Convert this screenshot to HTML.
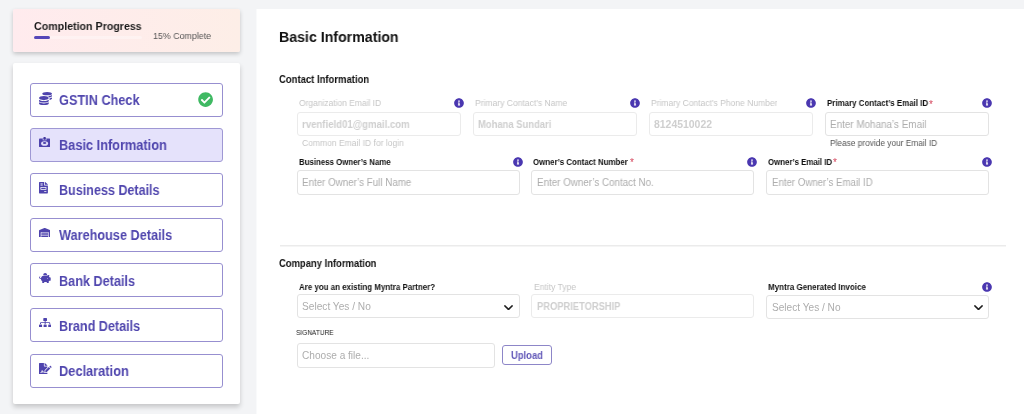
<!DOCTYPE html>
<html lang="en">
<head>
<meta charset="utf-8">
<title>Basic Information</title>
<style>
*{box-sizing:border-box;margin:0;padding:0}
html,body{width:1024px;height:414px;overflow:hidden}
body{background:#f3f4f6;font-family:"Liberation Sans",Arial,sans-serif;color:#111;position:relative}
.a,.tx,svg{position:absolute}
.tx{line-height:1;white-space:nowrap;transform-origin:0 50%;will-change:transform}
.progress{left:13px;top:9px;width:227px;height:43px;border-radius:2px;background:linear-gradient(90deg,#ffebee 0%,#fdeee7 100%);box-shadow:0 2px 4px rgba(0,0,0,.2)}
.track{left:34px;top:36px;width:108px;height:3px;border-radius:2px;background:rgba(255,255,255,.35)}
.bar{left:34px;top:36px;width:16px;height:3px;border-radius:2px;background:#5646b8}
.side{left:13px;top:63px;width:227px;height:341px;background:#fff;border-radius:2px;box-shadow:0 3px 5px rgba(0,0,0,.19)}
.item{left:30px;width:193px;height:34px;border:1px solid #978fd0;border-radius:3px;background:#fff}
.item.on{background:#e5e2fb;border-color:#9f98d4}
.main{left:257px;top:9px;width:767px;height:405px;background:#fff;box-shadow:-1px 0 0 #f9fafb}
.inp{height:24px;border:1px solid #e3e3e3;border-radius:3px;background:#fff}
.inp.dis{border-color:#ebebeb}
.hr{left:280px;top:245px;width:726px;height:1px;background:#ebebeb;box-shadow:0 1px 0 #f5f5f5}
.btn{left:502px;top:345px;width:50px;height:20px;border:1px solid #8d86c8;border-radius:3px;background:#fff}
</style>
</head>
<body>
<aside>
<div class="a progress"></div><div class="a track"></div><div class="a bar"></div>
<div class="a side"></div>
<div class="a item" style="top:83px"></div>
<div class="a item on" style="top:128px"></div>
<div class="a item" style="top:173px"></div>
<div class="a item" style="top:218px"></div>
<div class="a item" style="top:263px"></div>
<div class="a item" style="top:308px"></div>
<div class="a item" style="top:354px"></div>
<svg style="left:38.90px;top:91.50px" width="13.00" height="13.00" viewBox="0 0 512 512" preserveAspectRatio="none"><path fill="#4e43ad" d="M0 405.3V448c0 35.3 86 64 192 64s192-28.7 192-64v-42.7C342.700 434.400 267.200 448 192 448S41.300 434.400 0 405.300zM320 128c106 0 192-28.700 192-64S426 0 320 0 128 28.700 128 64s86 64 192 64zM0 300.400V352c0 35.300 86 64 192 64s192-28.700 192-64v-51.600c-41.300 34-116.900 51.600-192 51.600S41.300 334.400 0 300.400zm416 11c57.300-11.100 96-31.700 96-55.400v-42.700c-23.200 16.400-57.300 27.600-96 34.500v63.600zM192 160C86 160 0 195.800 0 240s86 80 192 80 192-35.800 192-80-86-80-192-80zm219.300 56.300c60-10.800 100.700-32 100.700-56.300v-42.700c-35.500 25.100-96.500 38.600-160.700 41.800 29.500 14.300 51.200 33.500 60 57.200z"/></svg>
<svg style="left:39.1px;top:137.1px" width="11.2" height="10.2" viewBox="0 0 11.2 10.2"><rect x="0" y="1.4" width="11.2" height="8.8" rx="0.9" fill="#4e43ad"/><path d="M3.7 1.4h3.8v1.9H3.7z" fill="#c9c4f3"/><rect x="4.4" y="0" width="2.4" height="2.8" rx="0.7" fill="#40369a"/><ellipse cx="5.6" cy="6.5" rx="3.5" ry="2.3" fill="#e2dffb"/><ellipse cx="5.6" cy="6.0" rx="1.7" ry="1.0" fill="#4e43ad"/></svg>
<svg style="left:39.10px;top:182.40px" width="8.90" height="11.40" viewBox="0 0 384 512" preserveAspectRatio="none"><path fill="#4e43ad" d="M288 256H96v64h192v-64zm89-151L279.100 7c-4.500-4.500-10.600-7-17-7H256v128h128v-6.100c0-6.300-2.500-12.400-7-16.900zm-153 31V0H24C10.700 0 0 10.700 0 24v464c0 13.300 10.700 24 24 24h336c13.300 0 24-10.700 24-24V160H248c-13.200 0-24-10.800-24-24zM64 72c0-4.420 3.580-8 8-8h80c4.420 0 8 3.580 8 8v16c0 4.420-3.580 8-8 8H72c-4.420 0-8-3.580-8-8V72zm0 64c0-4.420 3.580-8 8-8h80c4.420 0 8 3.580 8 8v16c0 4.420-3.580 8-8 8H72c-4.420 0-8-3.580-8-8v-16zm256 304c0 4.420-3.580 8-8 8h-80c-4.420 0-8-3.580-8-8v-16c0-4.420 3.580-8 8-8h80c4.420 0 8 3.580 8 8v16zm0-200v96c0 8.840-7.160 16-16 16H80c-8.840 0-16-7.160-16-16v-96c0-8.840 7.160-16 16-16h224c8.840 0 16 7.160 16 16z"/></svg>
<svg style="left:39.10px;top:228.00px" width="11.40" height="9.10" viewBox="0 0 640 512" preserveAspectRatio="none"><path fill="#4e43ad" d="M504 352H136.400c-4.400 0-8 3.600-8 8l-.100 48c0 4.400 3.600 8 8 8H504c4.400 0 8-3.600 8-8v-48c0-4.400-3.600-8-8-8zm0 96H136.100c-4.400 0-8 3.600-8 8l-.100 48c0 4.400 3.600 8 8 8h368c4.400 0 8-3.600 8-8v-48c0-4.400-3.600-8-8-8zm0-192H136.600c-4.400 0-8 3.600-8 8l-.100 48c0 4.400 3.600 8 8 8H504c4.400 0 8-3.600 8-8v-48c0-4.400-3.600-8-8-8zm106.500-139L338.400 3.700a48.150 48.150 0 0 0-36.900 0L29.500 117C11.700 124.500 0 141.900 0 161.300V504c0 4.400 3.600 8 8 8h80c4.400 0 8-3.600 8-8V256c0-17.600 14.600-32 32.600-32h382.800c18 0 32.600 14.400 32.600 32v248c0 4.400 3.600 8 8 8h80c4.400 0 8-3.600 8-8V161.300c0-19.400-11.700-36.800-29.500-44.300z"/></svg>
<svg style="left:39.10px;top:273.00px" width="11.70" height="10.20" viewBox="0 0 576 512" preserveAspectRatio="none"><path fill="#4e43ad" d="M560 224h-29.500c-8.800-20-21.600-37.700-37.400-52.500L512 96h-32c-29.400 0-55.400 13.500-73 34.300-7.600-1.100-15.100-2.300-23-2.300H256c-77.400 0-141.900 55-156.800 128H56c-14.800 0-26.500-13.500-23.500-28.800C34.700 215.800 45.400 208 57 208h1c3.300 0 6-2.700 6-6v-20c0-3.300-2.700-6-6-6-28.500 0-53.900 20.400-57.500 48.600C-3.900 258.800 22.700 288 56 288h40c0 52.200 25.400 98.100 64 127.300V496c0 8.800 7.200 16 16 16h64c8.800 0 16-7.200 16-16v-48h128v48c0 8.800 7.200 16 16 16h64c8.800 0 16-7.200 16-16v-80.700c11.800-8.900 22.300-19.400 31.300-31.300H560c8.800 0 16-7.200 16-16V240c0-8.800-7.200-16-16-16zm-128 64c-8.800 0-16-7.200-16-16s7.200-16 16-16 16 7.200 16 16-7.200 16-16 16zM256 96h128c5.400 0 10.700.4 15.900.8 0-.3.100-.5.100-.8 0-53-43-96-96-96s-96 43-96 96c0 2.100.5 4.100.6 6.200 15.200-3.900 31-6.200 47.400-6.200z"/></svg>
<svg style="left:39.10px;top:317.70px" width="12.30" height="9.60" viewBox="0 0 640 512" preserveAspectRatio="none"><path fill="#4e43ad" d="M128 352H32c-17.670 0-32 14.330-32 32v96c0 17.670 14.330 32 32 32h96c17.670 0 32-14.330 32-32v-96c0-17.670-14.330-32-32-32zm-24-80h192v48h48v-48h192v48h48v-57.590c0-21.170-17.230-38.410-38.410-38.410H344v-64h40c17.670 0 32-14.330 32-32V32c0-17.670-14.330-32-32-32H256c-17.670 0-32 14.330-32 32v96c0 17.670 14.330 32 32 32h40v64H94.410C73.230 224 56 241.230 56 262.410V320h48v-48zm264 80h-96c-17.670 0-32 14.330-32 32v96c0 17.670 14.330 32 32 32h96c17.670 0 32-14.330 32-32v-96c0-17.670-14.330-32-32-32zm240 0h-96c-17.670 0-32 14.330-32 32v96c0 17.670 14.330 32 32 32h96c17.670 0 32-14.330 32-32v-96c0-17.670-14.330-32-32-32z"/></svg>
<svg style="left:39.10px;top:362.70px" width="12.60" height="11.20" viewBox="0 0 576 512" preserveAspectRatio="none"><path fill="#4e43ad" d="M218.170 424.140c-2.950-5.920-8.090-6.520-10.170-6.520s-7.220.59-10.020 6.190l-7.670 15.340c-6.370 12.780-25.030 11.370-29.480-2.090L144 386.590l-10.610 31.880c-5.890 17.660-22.380 29.530-41 29.530H80c-8.840 0-16-7.160-16-16s7.160-16 16-16h12.390c4.830 0 9.110-3.080 10.640-7.660l18.190-54.640c3.300-9.810 12.440-16.410 22.780-16.410s19.480 6.590 22.770 16.410l13.880 41.640c19.750-16.190 54.060-9.700 66 14.160 1.890 3.780 5.490 5.950 9.360 6.260v-82.120l128-127.090V160H248c-13.200 0-24-10.800-24-24V0H24C10.700 0 0 10.700 0 24v464c0 13.300 10.700 24 24 24h336c13.300 0 24-10.700 24-24v-40l-128-.11c-23.240-.2-44.190-13.090-54.830-33.750zM384 121.900c0-6.300-2.500-12.400-7-16.900L279.100 7c-4.500-4.500-10.600-7-17-7H256v128h128v-6.100zm-96 225.060V416h68.990l161.680-162.780-67.880-67.880L288 346.960zm280.540-179.630l-31.870-31.870c-9.940-9.940-26.070-9.940-36.010 0l-27.250 27.250 67.880 67.880 27.250-27.250c9.950-9.940 9.950-26.070 0-36.010z"/></svg>
<svg style="left:198.10px;top:91.80px" width="15.20" height="15.20" viewBox="0 0 512 512" preserveAspectRatio="none"><path fill="#3fb963" d="M504 256c0 136.967-111.033 248-248 248S8 392.967 8 256 119.033 8 256 8s248 111.033 248 248zM227.314 387.314l184-184c6.248-6.248 6.248-16.379 0-22.627l-22.627-22.627c-6.248-6.249-16.379-6.249-22.628 0L216 308.118l-70.059-70.059c-6.248-6.248-16.379-6.248-22.628 0l-22.627 22.627c-6.248 6.248-6.248 16.379 0 22.627l104 104c6.249 6.249 16.379 6.249 22.628.001z"/></svg>
<div class="tx" id="t0" style="left:33.56px;top:20.69px;font-size:11px;color:#1c1c1c;font-weight:bold;transform:scaleX(0.9678);">Completion Progress</div>
<div class="tx" id="t1" style="left:153.37px;top:31.26px;font-size:9.5px;color:#555;transform:scaleX(0.9322);">15% Complete</div>
<div class="tx" id="t2" style="left:59.04px;top:93.15px;font-size:14px;color:#5046ae;font-weight:bold;transform:scaleX(0.9083);">GSTIN Check</div>
<div class="tx" id="t3" style="left:59.03px;top:138.25px;font-size:14px;color:#5046ae;font-weight:bold;transform:scaleX(0.9114);">Basic Information</div>
<div class="tx" id="t4" style="left:59.05px;top:183.35px;font-size:14px;color:#5046ae;font-weight:bold;transform:scaleX(0.8973);">Business Details</div>
<div class="tx" id="t5" style="left:59.04px;top:228.45px;font-size:14px;color:#5046ae;font-weight:bold;transform:scaleX(0.9072);">Warehouse Details</div>
<div class="tx" id="t6" style="left:59.04px;top:273.55px;font-size:14px;color:#5046ae;font-weight:bold;transform:scaleX(0.9051);">Bank Details</div>
<div class="tx" id="t7" style="left:59.05px;top:318.65px;font-size:14px;color:#5046ae;font-weight:bold;transform:scaleX(0.8981);">Brand Details</div>
<div class="tx" id="t8" style="left:59.03px;top:363.75px;font-size:14px;color:#5046ae;font-weight:bold;transform:scaleX(0.9152);">Declaration</div>
</aside>
<main>
<div class="a main"></div>
<div class="a inp dis" style="left:297px;top:112px;width:164px"></div>
<div class="a inp dis" style="left:473px;top:112px;width:164px"></div>
<div class="a inp dis" style="left:649px;top:112px;width:164px"></div>
<div class="a inp" style="left:825px;top:112px;width:164px"></div>
<div class="a inp" style="left:297px;top:170px;width:223px;height:25px"></div>
<div class="a inp" style="left:531px;top:170px;width:223px;height:25px"></div>
<div class="a inp" style="left:766px;top:170px;width:223px;height:25px"></div>
<div class="a inp" style="left:297px;top:294px;width:223px"></div>
<div class="a inp dis" style="left:531px;top:294px;width:223px"></div>
<div class="a inp" style="left:766px;top:295px;width:223px"></div>
<div class="a inp" style="left:297px;top:343px;width:198px;height:25px"></div>
<div class="a btn"></div>
<div class="a hr"></div>
<svg style="left:453.90px;top:98.40px" width="10.00" height="10.00" viewBox="0 0 512 512" preserveAspectRatio="none"><path fill="#4a37b0" d="M256 8C119.043 8 8 119.083 8 256c0 136.997 111.043 248 248 248s248-111.003 248-248C504 119.083 392.957 8 256 8zm0 110c23.196 0 42 18.804 42 42s-18.804 42-42 42-42-18.804-42-42 18.804-42 42-42zm56 254c0 6.627-5.373 12-12 12h-88c-6.627 0-12-5.373-12-12v-24c0-6.627 5.373-12 12-12h12v-64h-12c-6.627 0-12-5.373-12-12v-24c0-6.627 5.373-12 12-12h64c6.627 0 12 5.373 12 12v100h12c6.627 0 12 5.373 12 12v24z"/></svg>
<svg style="left:629.90px;top:98.40px" width="10.00" height="10.00" viewBox="0 0 512 512" preserveAspectRatio="none"><path fill="#4a37b0" d="M256 8C119.043 8 8 119.083 8 256c0 136.997 111.043 248 248 248s248-111.003 248-248C504 119.083 392.957 8 256 8zm0 110c23.196 0 42 18.804 42 42s-18.804 42-42 42-42-18.804-42-42 18.804-42 42-42zm56 254c0 6.627-5.373 12-12 12h-88c-6.627 0-12-5.373-12-12v-24c0-6.627 5.373-12 12-12h12v-64h-12c-6.627 0-12-5.373-12-12v-24c0-6.627 5.373-12 12-12h64c6.627 0 12 5.373 12 12v100h12c6.627 0 12 5.373 12 12v24z"/></svg>
<svg style="left:805.90px;top:98.40px" width="10.00" height="10.00" viewBox="0 0 512 512" preserveAspectRatio="none"><path fill="#4a37b0" d="M256 8C119.043 8 8 119.083 8 256c0 136.997 111.043 248 248 248s248-111.003 248-248C504 119.083 392.957 8 256 8zm0 110c23.196 0 42 18.804 42 42s-18.804 42-42 42-42-18.804-42-42 18.804-42 42-42zm56 254c0 6.627-5.373 12-12 12h-88c-6.627 0-12-5.373-12-12v-24c0-6.627 5.373-12 12-12h12v-64h-12c-6.627 0-12-5.373-12-12v-24c0-6.627 5.373-12 12-12h64c6.627 0 12 5.373 12 12v100h12c6.627 0 12 5.373 12 12v24z"/></svg>
<svg style="left:981.90px;top:98.40px" width="10.00" height="10.00" viewBox="0 0 512 512" preserveAspectRatio="none"><path fill="#4a37b0" d="M256 8C119.043 8 8 119.083 8 256c0 136.997 111.043 248 248 248s248-111.003 248-248C504 119.083 392.957 8 256 8zm0 110c23.196 0 42 18.804 42 42s-18.804 42-42 42-42-18.804-42-42 18.804-42 42-42zm56 254c0 6.627-5.373 12-12 12h-88c-6.627 0-12-5.373-12-12v-24c0-6.627 5.373-12 12-12h12v-64h-12c-6.627 0-12-5.373-12-12v-24c0-6.627 5.373-12 12-12h64c6.627 0 12 5.373 12 12v100h12c6.627 0 12 5.373 12 12v24z"/></svg>
<svg style="left:512.80px;top:157.00px" width="10.00" height="10.00" viewBox="0 0 512 512" preserveAspectRatio="none"><path fill="#4a37b0" d="M256 8C119.043 8 8 119.083 8 256c0 136.997 111.043 248 248 248s248-111.003 248-248C504 119.083 392.957 8 256 8zm0 110c23.196 0 42 18.804 42 42s-18.804 42-42 42-42-18.804-42-42 18.804-42 42-42zm56 254c0 6.627-5.373 12-12 12h-88c-6.627 0-12-5.373-12-12v-24c0-6.627 5.373-12 12-12h12v-64h-12c-6.627 0-12-5.373-12-12v-24c0-6.627 5.373-12 12-12h64c6.627 0 12 5.373 12 12v100h12c6.627 0 12 5.373 12 12v24z"/></svg>
<svg style="left:747.20px;top:157.00px" width="10.00" height="10.00" viewBox="0 0 512 512" preserveAspectRatio="none"><path fill="#4a37b0" d="M256 8C119.043 8 8 119.083 8 256c0 136.997 111.043 248 248 248s248-111.003 248-248C504 119.083 392.957 8 256 8zm0 110c23.196 0 42 18.804 42 42s-18.804 42-42 42-42-18.804-42-42 18.804-42 42-42zm56 254c0 6.627-5.373 12-12 12h-88c-6.627 0-12-5.373-12-12v-24c0-6.627 5.373-12 12-12h12v-64h-12c-6.627 0-12-5.373-12-12v-24c0-6.627 5.373-12 12-12h64c6.627 0 12 5.373 12 12v100h12c6.627 0 12 5.373 12 12v24z"/></svg>
<svg style="left:981.80px;top:157.00px" width="10.00" height="10.00" viewBox="0 0 512 512" preserveAspectRatio="none"><path fill="#4a37b0" d="M256 8C119.043 8 8 119.083 8 256c0 136.997 111.043 248 248 248s248-111.003 248-248C504 119.083 392.957 8 256 8zm0 110c23.196 0 42 18.804 42 42s-18.804 42-42 42-42-18.804-42-42 18.804-42 42-42zm56 254c0 6.627-5.373 12-12 12h-88c-6.627 0-12-5.373-12-12v-24c0-6.627 5.373-12 12-12h12v-64h-12c-6.627 0-12-5.373-12-12v-24c0-6.627 5.373-12 12-12h64c6.627 0 12 5.373 12 12v100h12c6.627 0 12 5.373 12 12v24z"/></svg>
<svg style="left:982.00px;top:282.40px" width="10.00" height="10.00" viewBox="0 0 512 512" preserveAspectRatio="none"><path fill="#4a37b0" d="M256 8C119.043 8 8 119.083 8 256c0 136.997 111.043 248 248 248s248-111.003 248-248C504 119.083 392.957 8 256 8zm0 110c23.196 0 42 18.804 42 42s-18.804 42-42 42-42-18.804-42-42 18.804-42 42-42zm56 254c0 6.627-5.373 12-12 12h-88c-6.627 0-12-5.373-12-12v-24c0-6.627 5.373-12 12-12h12v-64h-12c-6.627 0-12-5.373-12-12v-24c0-6.627 5.373-12 12-12h64c6.627 0 12 5.373 12 12v100h12c6.627 0 12 5.373 12 12v24z"/></svg>
<svg style="left:504.20px;top:304.50px" width="9.00" height="5.40" viewBox="5 123 438 266" preserveAspectRatio="none"><path fill="#1e1e1e" d="M207.029 381.476L12.686 187.132c-9.373-9.373-9.373-24.569 0-33.941l22.667-22.667c9.357-9.357 24.522-9.375 33.901-.04L224 284.505l154.745-154.021c9.379-9.335 24.544-9.317 33.901.04l22.667 22.667c9.373 9.373 9.373 24.569 0 33.941L240.971 381.476c-9.373 9.372-24.569 9.372-33.942 0z"/></svg>
<svg style="left:973.50px;top:305.00px" width="9.00" height="5.40" viewBox="5 123 438 266" preserveAspectRatio="none"><path fill="#1e1e1e" d="M207.029 381.476L12.686 187.132c-9.373-9.373-9.373-24.569 0-33.941l22.667-22.667c9.357-9.357 24.522-9.375 33.901-.04L224 284.505l154.745-154.021c9.379-9.335 24.544-9.317 33.901.04l22.667 22.667c9.373 9.373 9.373 24.569 0 33.941L240.971 381.476c-9.373 9.372-24.569 9.372-33.942 0z"/></svg>
<div class="tx" id="t9" style="left:278.95px;top:29.73px;font-size:14.5px;color:#111;font-weight:bold;transform:scaleX(0.9767);">Basic Information</div>
<div class="tx" id="t10" style="left:279.23px;top:74.11px;font-size:10.5px;color:#111;font-weight:bold;transform:scaleX(0.9037);">Contact Information</div>
<div class="tx" id="t11" style="left:299.09px;top:99.18px;font-size:9px;color:#c6c6c6;transform:scaleX(0.9383);">Organization Email ID</div>
<div class="tx" id="t12" style="left:475.09px;top:99.18px;font-size:9px;color:#c6c6c6;transform:scaleX(0.9484);">Primary Contact’s Name</div>
<div class="tx" id="t13" style="left:651.09px;top:99.18px;font-size:9px;color:#c6c6c6;transform:scaleX(0.9437);">Primary Contact’s Phone Number</div>
<div class="tx" id="t14" style="left:827.12px;top:99.18px;font-size:9px;color:#111;font-weight:bold;transform:scaleX(0.8812);">Primary Contact’s Email ID</div>
<div class="tx" id="t15" style="left:302.02px;top:119.73px;font-size:10px;color:#cfcfcf;font-weight:bold;transform:scaleX(0.9611);">rvenfield01@gmail.com</div>
<div class="tx" id="t16" style="left:478.43px;top:119.73px;font-size:10px;color:#cfcfcf;font-weight:bold;transform:scaleX(0.9427);">Mohana Sundari</div>
<div class="tx" id="t17" style="left:653.97px;top:119.73px;font-size:10px;color:#cfcfcf;font-weight:bold;transform:scaleX(1.0435);">8124510022</div>
<div class="tx" id="t18" style="left:830.01px;top:119.73px;font-size:10px;color:#adadad;transform:scaleX(0.9870);">Enter Mohana’s Email</div>
<div class="tx" id="t19" style="left:301.69px;top:138.58px;font-size:9px;color:#c6c6c6;transform:scaleX(0.9471);">Common Email ID for login</div>
<div class="tx" id="t20" style="left:829.90px;top:138.58px;font-size:9px;color:#555;transform:scaleX(0.9239);">Please provide your Email ID</div>
<div class="tx" id="t21" style="left:298.93px;top:157.68px;font-size:9px;color:#111;font-weight:bold;transform:scaleX(0.8728);">Business Owner’s Name</div>
<div class="tx" id="t22" style="left:533.33px;top:157.68px;font-size:9px;color:#111;font-weight:bold;transform:scaleX(0.8774);">Owner’s Contact Number</div>
<div class="tx" id="t23" style="left:768.03px;top:157.68px;font-size:9px;color:#111;font-weight:bold;transform:scaleX(0.8715);">Owner’s Email ID</div>
<div class="tx" id="t24" style="left:302.31px;top:178.03px;font-size:10px;color:#adadad;transform:scaleX(0.9766);">Enter Owner’s Full Name</div>
<div class="tx" id="t25" style="left:537.01px;top:178.03px;font-size:10px;color:#adadad;transform:scaleX(0.9802);">Enter Owner’s Contact No.</div>
<div class="tx" id="t26" style="left:771.92px;top:178.03px;font-size:10px;color:#adadad;transform:scaleX(0.9660);">Enter Owner’s Email ID</div>
<div class="tx" id="t27" style="left:279.03px;top:257.61px;font-size:10.5px;color:#111;font-weight:bold;transform:scaleX(0.8980);">Company Information</div>
<div class="tx" id="t28" style="left:299.22px;top:282.68px;font-size:9px;color:#111;font-weight:bold;transform:scaleX(0.8806);">Are you an existing Myntra Partner?</div>
<div class="tx" id="t29" style="left:533.69px;top:282.68px;font-size:9px;color:#c6c6c6;transform:scaleX(0.9503);">Entity Type</div>
<div class="tx" id="t30" style="left:768.22px;top:282.98px;font-size:9px;color:#111;font-weight:bold;transform:scaleX(0.8905);">Myntra Generated Invoice</div>
<div class="tx" id="t31" style="left:302.39px;top:302.14px;font-size:10px;color:#adadad;transform:scaleX(1.0145);">Select Yes / No</div>
<div class="tx" id="t32" style="left:536.94px;top:301.94px;font-size:10px;color:#cfcfcf;font-weight:bold;transform:scaleX(0.9345);">PROPRIETORSHIP</div>
<div class="tx" id="t33" style="left:771.89px;top:302.64px;font-size:10px;color:#adadad;transform:scaleX(1.0101);">Select Yes / No</div>
<div class="tx" id="t34" style="left:296.41px;top:328.81px;font-size:7.2px;color:#1a1a1a;transform:scaleX(0.9094);">SIGNATURE</div>
<div class="tx" id="t35" style="left:302.29px;top:350.84px;font-size:10px;color:#adadad;transform:scaleX(1.0104);">Choose a file...</div>
<div class="tx" id="t36" style="left:511.13px;top:351.04px;font-size:10px;color:#6258b8;font-weight:bold;transform:scaleX(0.9425);">Upload</div>
<div class="tx" id="t37" style="left:929.10px;top:99.73px;font-size:10px;color:#d5455c;">*</div>
<div class="tx" id="t38" style="left:629.80px;top:158.24px;font-size:10px;color:#d5455c;">*</div>
<div class="tx" id="t39" style="left:833.30px;top:158.24px;font-size:10px;color:#d5455c;">*</div>
</main>
</body>
</html>
